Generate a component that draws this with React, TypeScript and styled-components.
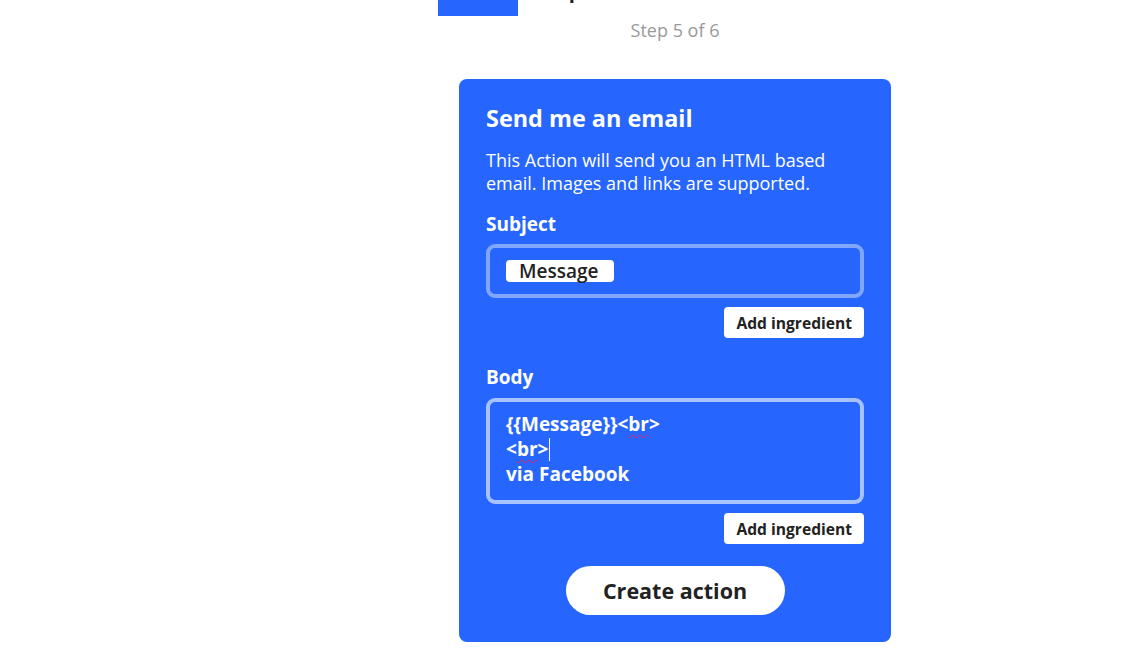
import React from "react";
import styled, { createGlobalStyle } from "styled-components";

const GlobalStyle = createGlobalStyle`
  html, body {
    margin: 0;
    padding: 0;
    background: #ffffff;
  }
  body {
    font-family: "Open Sans", Lato, "Noto Sans", "Liberation Sans", sans-serif;
    color: #222222;
  }
  * { box-sizing: border-box; }
`;

const BLUE = "#2666ff";

const Page = styled.div`
  display: grid;
  grid-template-columns: 210px 1fr;
  width: 1140px;
`;

const Sidebar = styled.aside``;

const Main = styled.main`
  display: flex;
  flex-direction: column;
  align-items: center;
`;

const Header = styled.header`
  width: 474px;
  height: 16px;
  overflow: hidden;
  display: flex;
  align-items: flex-end;
  gap: 6px;
`;

const Logo = styled.div`
  flex-shrink: 0;
  width: 80px;
  height: 80px;
  background: ${BLUE};
`;

const Heading = styled.h1`
  margin: 0 0 14px 0;
  font-size: 20px;
  line-height: 22px;
  font-weight: 700;
  color: #222222;
  white-space: nowrap;
`;

const StepText = styled.div`
  margin-top: 2px;
  font-size: 18px;
  line-height: 24px;
  color: #999999;
`;

const Card = styled.section`
  margin-top: 37px;
  width: 432px;
  padding: 24px 27px 27px;
  background: ${BLUE};
  border-radius: 8px;
  display: flex;
  flex-direction: column;
  color: #ffffff;
`;

const Title = styled.h2`
  margin: 0;
  font-size: 23.4px;
  line-height: 30px;
  font-weight: 700;
`;

const Description = styled.p`
  margin: 16px 0 0;
  font-size: 18px;
  line-height: 23px;
`;

const FieldLabel = styled.label<{ $gap: number }>`
  display: block;
  margin-top: ${(p) => p.$gap}px;
  font-size: 19px;
  line-height: 24px;
  font-weight: 700;
`;

const FieldBox = styled.div<{ $focused?: boolean }>`
  margin-top: ${(p) => (p.$focused ? 9 : 8)}px;
  border: 4px solid
    ${(p) => (p.$focused ? "rgba(255,255,255,0.6)" : "rgba(255,255,255,0.42)")};
  border-radius: 9px;
`;

const SubjectInner = styled.div`
  height: 46px;
  padding: 12px 16px;
  display: flex;
  align-items: center;
`;

const Pill = styled.span`
  display: inline-block;
  background: #ffffff;
  color: #222222;
  border-radius: 4px;
  padding: 0 16px 0 13px;
  height: 22px;
  font-size: 19px;
  line-height: 22px;
  font-weight: 600;
`;

const BodyText = styled.div`
  height: 98px;
  padding: 10px 16px 0;
  font-size: 19px;
  line-height: 25px;
  font-weight: 700;
  color: #ffffff;
`;

const Misspelled = styled.span`
  text-decoration: underline wavy #e0245e;
  text-decoration-thickness: 1px;
  text-underline-offset: 3px;
`;

const Caret = styled.span`
  display: inline-block;
  width: 1px;
  height: 23px;
  background: #ffffff;
  vertical-align: -5px;
  margin-left: 1px;
`;

const IngredientRow = styled.div`
  margin-top: 9px;
  display: flex;
  justify-content: flex-end;
`;

const IngredientButton = styled.button`
  height: 31px;
  padding: 0 12px;
  border: none;
  border-radius: 4px;
  background: #ffffff;
  color: #222222;
  font-family: inherit;
  font-size: 15.6px;
  font-weight: 700;
  cursor: pointer;
`;

const CreateButton = styled.button`
  align-self: center;
  margin-top: 22px;
  width: 219px;
  height: 49px;
  border: none;
  border-radius: 25px;
  background: #ffffff;
  color: #222222;
  font-family: inherit;
  font-size: 21.5px;
  font-weight: 700;
  cursor: pointer;
`;

export default function App() {
  return (
    <>
      <GlobalStyle />
      <Page>
        <Sidebar />
        <Main>
          <Header>
            <Logo />
            <Heading>Complete action fields</Heading>
          </Header>
          <StepText>Step 5 of 6</StepText>
          <Card>
            <Title>Send me an email</Title>
            <Description>
              This Action will send you an HTML based email. Images and links
              are supported.
            </Description>

            <FieldLabel $gap={17}>Subject</FieldLabel>
            <FieldBox>
              <SubjectInner>
                <Pill>Message</Pill>
              </SubjectInner>
            </FieldBox>
            <IngredientRow>
              <IngredientButton>Add ingredient</IngredientButton>
            </IngredientRow>

            <FieldLabel $gap={27}>Body</FieldLabel>
            <FieldBox $focused>
              <BodyText>
                {"{{Message}}<"}
                <Misspelled>br</Misspelled>
                {">"}
                <br />
                {"<"}
                <Misspelled>br</Misspelled>
                {">"}
                <Caret />
                <br />
                via Facebook
              </BodyText>
            </FieldBox>
            <IngredientRow>
              <IngredientButton>Add ingredient</IngredientButton>
            </IngredientRow>

            <CreateButton>Create action</CreateButton>
          </Card>
        </Main>
      </Page>
    </>
  );
}
